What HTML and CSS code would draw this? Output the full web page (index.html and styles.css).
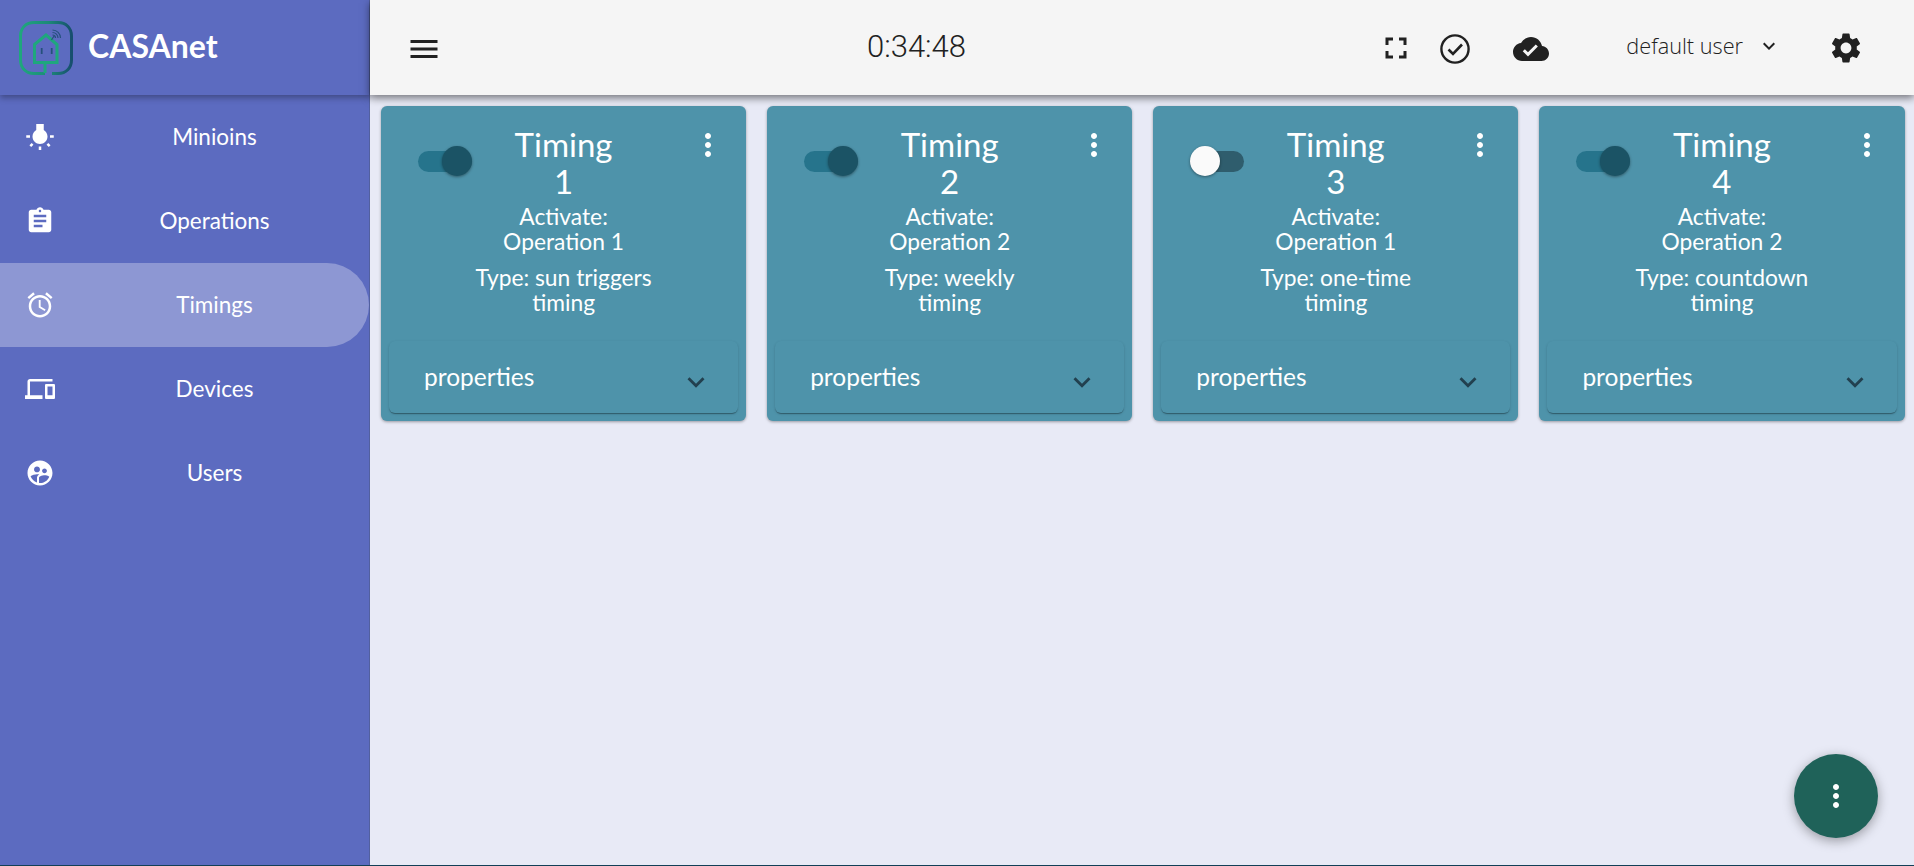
FILE: index.html
```html
<!DOCTYPE html>
<html lang="en">
<head>
    <meta charset="UTF-8">
    <meta name="viewport" content="width=device-width, initial-scale=1.0">
    <title>CASAnet</title>
    <link rel="stylesheet" href="styles.css">
</head>
<body>
    <svg class="defs" width="0" height="0">
        <symbol id="i-more" viewBox="0 0 24 24"><path d="M12 8c1.1 0 2-.9 2-2s-.9-2-2-2-2 .9-2 2 .9 2 2 2zm0 2c-1.1 0-2 .9-2 2s.9 2 2 2 2-.9 2-2-.9-2-2-2zm0 6c-1.1 0-2 .9-2 2s.9 2 2 2 2-.9 2-2-.9-2-2-2z"/></symbol>
        <symbol id="i-expand" viewBox="0 0 24 24"><path d="M16.59 8.59L12 13.17 7.41 8.59 6 10l6 6 6-6z"/></symbol>
    </svg>

    <aside class="sidebar">
        <div class="brand">
            <svg class="logo" viewBox="0 0 54 54" fill="none">
                <defs>
                    <linearGradient id="logoline" x1="0" y1="0" x2="1" y2="0">
                        <stop offset="0" stop-color="#1fa77d"/>
                        <stop offset="0.55" stop-color="#1c8a78"/>
                        <stop offset="1" stop-color="#174f6e"/>
                    </linearGradient>
                </defs>
                <path d="M26 52.500H15C7 52.500 1.500 47 1.500 39V15C1.500 7 7 1.500 15 1.500H39C47 1.500 52.500 7 52.500 15V39C52.500 47 47 52.500 39 52.500H33" stroke="url(#logoline)" stroke-width="3"/>
                <path d="M26 52V41.500H15.500V23.500L27 14L38 23.500V41.500H27" stroke="#1fa77d" stroke-width="3"/>
                <path d="M22.700 27V33M32.700 27V33" stroke="#25507c" stroke-width="1.800"/>
                <path d="M32.500 19L35 15M33.500 14A3 3 0 0 1 36.500 17M33.500 11.500A5.500 5.500 0 0 1 39 17M33.500 9A8 8 0 0 1 41.500 17" stroke="#25507c" stroke-width="1.200"/>
            </svg>
            <span class="brand-name">CASAnet</span>
        </div>
        <nav class="nav">
            <a class="nav-item">
                <svg class="nav-icon" viewBox="0 0 24 24"><path d="M3.550 18.540l1.410 1.410 1.790-1.800-1.410-1.410-1.790 1.800zM11 22.450h2V19.500h-2v2.950zM4 10.500H1v2h3v-2zm11-4.190V1.500H9v4.810C7.210 7.350 6 9.280 6 11.500c0 3.310 2.690 6 6 6s6-2.690 6-6c0-2.220-1.210-4.150-3-5.190zm5 4.190v2h3v-2h-3zm-2.760 7.660l1.790 1.800 1.410-1.410-1.800-1.790-1.400 1.400z"/></svg>
                <span class="nav-label">Minioins</span>
            </a>
            <a class="nav-item">
                <svg class="nav-icon" viewBox="0 0 24 24"><path d="M19 3h-4.180C14.400 1.840 13.300 1 12 1c-1.300 0-2.400.84-2.820 2H5c-1.100 0-2 .9-2 2v14c0 1.100.9 2 2 2h14c1.100 0 2-.9 2-2V5c0-1.100-.9-2-2-2zm-7 0c.55 0 1 .45 1 1s-.45 1-1 1-1-.45-1-1 .45-1 1-1zm2 14H7v-2h7v2zm3-4H7v-2h10v2zm0-4H7V7h10v2z"/></svg>
                <span class="nav-label">Operations</span>
            </a>
            <a class="nav-item active">
                <svg class="nav-icon" viewBox="0 0 24 24"><path d="M22 5.720l-4.600-3.860-1.290 1.530 4.600 3.860L22 5.720zM7.880 3.390L6.600 1.860 2 5.710l1.290 1.530 4.590-3.850zM12.500 8H11v6l4.750 2.850.75-1.230-4-2.370V8zM12 4c-4.970 0-9 4.030-9 9s4.030 9 9 9 9-4.030 9-9-4.030-9-9-9zm0 16c-3.870 0-7-3.130-7-7s3.130-7 7-7 7 3.130 7 7-3.130 7-7 7z"/></svg>
                <span class="nav-label">Timings</span>
            </a>
            <a class="nav-item">
                <svg class="nav-icon" viewBox="0 0 24 24"><path d="M4 6h18V4H4c-1.100 0-2 .9-2 2v11H0v3h14v-3H4V6zm19 2h-6c-.55 0-1 .45-1 1v10c0 .55.45 1 1 1h6c.55 0 1-.45 1-1V9c0-.55-.45-1-1-1zm-1 9h-4v-7h4v7z"/></svg>
                <span class="nav-label">Devices</span>
            </a>
            <a class="nav-item">
                <svg class="nav-icon" viewBox="0 0 24 24"><path d="M11.990 2c-5.520 0-10 4.480-10 10s4.480 10 10 10 10-4.480 10-10-4.480-10-10-10zm3.610 6.340c1.070 0 1.930.86 1.930 1.930 0 1.070-.86 1.930-1.930 1.930-1.070 0-1.930-.86-1.930-1.930-.01-1.070.86-1.930 1.930-1.930zm-6-1.580c1.300 0 2.360 1.060 2.360 2.360 0 1.300-1.060 2.360-2.360 2.360s-2.360-1.060-2.360-2.360c0-1.310 1.050-2.360 2.360-2.360zm0 9.130v3.750c-2.400-.75-4.300-2.600-5.140-4.960 1.050-1.120 3.670-1.690 5.140-1.690.53 0 1.200.08 1.900.22-1.640.87-1.900 2.020-1.900 2.680zM11.990 20c-.27 0-.53-.01-.79-.04v-4.070c0-1.420 2.940-2.130 4.400-2.130 1.070 0 2.920.39 3.840 1.150-1.170 2.970-4.060 5.090-7.450 5.090z"/></svg>
                <span class="nav-label">Users</span>
            </a>
        </nav>
    </aside>

    <div class="page">
        <header class="topbar">
            <svg class="menu-icon" viewBox="0 0 24 24"><path d="M3 18h18v-2H3v2zm0-5h18v-2H3v2zm0-7v2h18V6H3z"/></svg>
            <div class="clock">0:34:48</div>
            <div class="tools">
                <svg class="tool-full" viewBox="0 0 24 24"><path d="M7 14H5v5h5v-2H7v-3zm-2-4h2V7h3V5H5v5zm12 7h-3v2h5v-5h-2v3zM14 5v2h3v3h2V5h-5z"/></svg>
                <svg class="tool-check" viewBox="0 0 30 30" fill="none"><circle cx="15" cy="15" r="13.600" stroke="#212121" stroke-width="2.400"/><path d="M8.500 15.500L13 20L22 10.500" stroke="#212121" stroke-width="2.600"/></svg>
                <svg class="tool-cloud" viewBox="0 0 24 24"><path d="M19.350 10.040C18.670 6.590 15.640 4 12 4 9.110 4 6.600 5.640 5.350 8.040 2.340 8.360 0 10.910 0 14c0 3.310 2.690 6 6 6h13c2.760 0 5-2.240 5-5 0-2.640-2.050-4.780-4.650-4.960zM10 17l-3.500-3.500 1.410-1.410L10 14.170 15.180 9l1.410 1.410L10 17z"/></svg>
                <div class="user">
                    <span>default user</span>
                    <svg class="user-arrow" viewBox="0 0 24 24"><use href="#i-expand"/></svg>
                </div>
                <svg class="tool-gear" viewBox="0 0 24 24"><path d="M19.140 12.940c.04-.3.06-.61.06-.94 0-.32-.02-.64-.07-.94l2.030-1.580c.18-.14.23-.41.12-.61l-1.920-3.320c-.12-.22-.37-.29-.59-.22l-2.390.96c-.5-.38-1.030-.7-1.620-.94l-.36-2.540c-.04-.24-.24-.41-.48-.41h-3.840c-.24 0-.43.17-.47.41l-.36 2.540c-.59.24-1.130.57-1.620.94l-2.390-.96c-.22-.08-.47 0-.59.22L2.740 8.870c-.12.21-.08.47.12.61l2.030 1.580c-.05.3-.09.63-.09.94s.02.64.07.94l-2.030 1.580c-.18.14-.23.41-.12.61l1.920 3.320c.12.22.37.29.59.22l2.390-.96c.5.38 1.030.7 1.620.94l.36 2.540c.05.24.24.41.48.41h3.840c.24 0 .44-.17.47-.41l.36-2.540c.59-.24 1.130-.56 1.620-.94l2.390.96c.22.08.47 0 .59-.22l1.920-3.320c.12-.22.07-.47-.12-.61l-2.010-1.580zM12 15.600c-1.980 0-3.600-1.620-3.600-3.600s1.620-3.600 3.600-3.600 3.600 1.620 3.600 3.600-1.620 3.600-3.600 3.600z"/></svg>
            </div>
        </header>

        <main class="cards">
            <section class="card">
                <div class="card-head">
                    <div class="switch on"><span class="thumb"></span></div>
                    <h2 class="card-title">Timing 1</h2>
                    <svg class="more" viewBox="0 0 24 24"><use href="#i-more"/></svg>
                </div>
                <p class="card-line">Activate: Operation 1</p>
                <p class="card-line">Type: sun triggers timing</p>
                <div class="props"><span>properties</span><svg class="props-arrow" viewBox="0 0 24 24"><use href="#i-expand"/></svg></div>
            </section>
            <section class="card">
                <div class="card-head">
                    <div class="switch on"><span class="thumb"></span></div>
                    <h2 class="card-title">Timing 2</h2>
                    <svg class="more" viewBox="0 0 24 24"><use href="#i-more"/></svg>
                </div>
                <p class="card-line">Activate: Operation 2</p>
                <p class="card-line">Type: weekly timing</p>
                <div class="props"><span>properties</span><svg class="props-arrow" viewBox="0 0 24 24"><use href="#i-expand"/></svg></div>
            </section>
            <section class="card">
                <div class="card-head">
                    <div class="switch"><span class="thumb"></span></div>
                    <h2 class="card-title">Timing 3</h2>
                    <svg class="more" viewBox="0 0 24 24"><use href="#i-more"/></svg>
                </div>
                <p class="card-line">Activate: Operation 1</p>
                <p class="card-line">Type: one-time timing</p>
                <div class="props"><span>properties</span><svg class="props-arrow" viewBox="0 0 24 24"><use href="#i-expand"/></svg></div>
            </section>
            <section class="card">
                <div class="card-head">
                    <div class="switch on"><span class="thumb"></span></div>
                    <h2 class="card-title">Timing 4</h2>
                    <svg class="more" viewBox="0 0 24 24"><use href="#i-more"/></svg>
                </div>
                <p class="card-line">Activate: Operation 2</p>
                <p class="card-line">Type: countdown timing</p>
                <div class="props"><span>properties</span><svg class="props-arrow" viewBox="0 0 24 24"><use href="#i-expand"/></svg></div>
            </section>
        </main>
    </div>

    <button class="fab"><svg viewBox="0 0 24 24"><use href="#i-more"/></svg></button>
</body>
</html>
```

FILE: styles.css
```css
html, body {
    margin: 0;
    padding: 0;
    height: 100%;
    overflow: hidden;
}
body {
    display: flex;
    background-color: #e8eaf6;
    border-bottom: 1px solid #123f57;
    font-family: "Lato", "Noto Sans", sans-serif;
    color: white;
    box-sizing: border-box;
}
.defs {
    position: absolute;
}

/* sidebar */
.sidebar {
    width: 370px;
    flex-shrink: 0;
    background-color: #5c6bc0;
    border-right: 1px solid #52609f;
    box-sizing: border-box;
}
.brand {
    height: 95px;
    display: flex;
    align-items: center;
    padding-left: 19px;
    box-shadow: 0 3px 6px rgba(0, 0, 0, 0.3);
}
.logo {
    width: 54px;
    height: 54px;
}
.brand-name {
    margin-left: 15px;
    font-size: 32px;
    font-weight: 700;
    padding-bottom: 4px;
}
.nav-item {
    position: relative;
    height: 84px;
    display: flex;
    align-items: center;
    justify-content: center;
    padding-left: 60px;
    box-sizing: border-box;
}
.nav-item.active {
    background-color: #8d97d3;
    border-radius: 0 42px 42px 0;
}
.nav-icon {
    position: absolute;
    left: 25px;
    top: 27px;
    width: 30px;
    height: 30px;
    fill: white;
}
.nav-label {
    font-size: 22.5px;
    padding-bottom: 1px;
}

/* top bar */
.page {
    flex: 1;
    min-width: 0;
    display: flex;
    flex-direction: column;
}
.topbar {
    height: 95px;
    flex-shrink: 0;
    position: relative;
    display: flex;
    align-items: center;
    background-color: #f5f5f5;
    box-shadow: 0 3px 8px rgba(0, 0, 0, 0.5);
    color: #212121;
    padding-left: 36px;
}
.menu-icon {
    width: 36px;
    height: 36px;
    margin-top: 2px;
    fill: #212121;
}
.clock {
    margin-left: 425px;
    font-family: "Roboto", sans-serif;
    font-size: 31px;
    font-weight: 300;
    color: #212121;
    padding-bottom: 3px;
    width: 100px;
}
.tools {
    margin-left: auto;
    display: flex;
    align-items: center;
    padding-right: 50px;
}
.tool-full {
    width: 36px;
    height: 36px;
    fill: #212121;
}
.tool-check {
    width: 30px;
    height: 30px;
    margin-left: 26px;
    margin-top: 2px;
}
.tool-cloud {
    width: 36px;
    height: 36px;
    fill: #212121;
    margin-left: 43px;
    margin-top: 2px;
}
.user {
    display: flex;
    align-items: center;
    margin-left: 77px;
    font-family: "Open Sans", sans-serif;
    font-size: 21.7px;
    font-weight: 300;
    padding-bottom: 4px;
}
.user-arrow {
    width: 24px;
    height: 24px;
    margin-left: 14px;
    fill: #212121;
}
.tool-gear {
    width: 36px;
    height: 36px;
    margin-left: 47px;
    fill: #212121;
}

/* timing cards */
.cards {
    display: grid;
    grid-template-columns: repeat(4, 1fr);
    column-gap: 21px;
    align-items: start;
    padding: 11px 9.5px 0 11px;
}
.card {
    height: 315px;
    background-color: #4e93aa;
    border-radius: 6px;
    box-shadow: 0 1px 3px rgba(0, 0, 0, 0.35);
    box-sizing: border-box;
    padding: 0 8px;
    display: flex;
    flex-direction: column;
    align-items: center;
    text-align: center;
}
.card-head {
    width: 100%;
    display: grid;
    grid-template-columns: 1fr 120px 1fr;
    align-items: start;
}
.switch {
    position: relative;
    justify-self: start;
    width: 54px;
    height: 21px;
    margin: 45px 0 0 29px;
    border-radius: 11px;
    background-color: #2f5d6d;
}
.switch.on {
    background-color: #26748c;
}
.thumb {
    position: absolute;
    left: 0;
    top: -5px;
    width: 30px;
    height: 30px;
    border-radius: 50%;
    background-color: #fafafa;
    box-shadow: 0 1px 3px rgba(0, 0, 0, 0.4);
}
.switch.on .thumb {
    left: 24px;
    background-color: #1b5365;
}
.card-title {
    margin: 20px 0 0;
    font-size: 33px;
    font-weight: 400;
    line-height: 37px;
}
.more {
    justify-self: end;
    width: 36px;
    height: 36px;
    margin: 21px 12px 0 0;
    fill: white;
}
.card-line {
    margin: 0 0 11px;
    width: 190px;
    font-size: 22.800px;
    line-height: 25px;
}
.card-line:first-of-type {
    margin-top: 4px;
}
.props {
    margin-top: auto;
    margin-bottom: 8px;
    width: 100%;
    height: 72px;
    display: flex;
    align-items: center;
    justify-content: space-between;
    box-sizing: border-box;
    padding: 0 25px 0 35px;
    background-color: #4e93aa;
    border-radius: 6px;
    box-shadow: 0 2px 1px -1px rgba(0, 0, 0, 0.2), 0 1px 1px 0 rgba(0, 0, 0, 0.14), 0 1px 3px 0 rgba(0, 0, 0, 0.12);
    font-size: 24.5px;
}
.props span {
    padding-bottom: 2px;
}
.props-arrow {
    width: 34px;
    height: 34px;
    margin-top: 9px;
    fill: #22404f;
}

/* floating button */
.fab {
    position: fixed;
    right: 36px;
    bottom: 28px;
    width: 84px;
    height: 84px;
    padding: 0;
    border: none;
    border-radius: 50%;
    background-color: #1f6259;
    box-shadow: 0 3px 12px rgba(0, 0, 0, 0.35);
    display: flex;
    align-items: center;
    justify-content: center;
}
.fab svg {
    width: 36px;
    height: 36px;
    fill: white;
}
```
